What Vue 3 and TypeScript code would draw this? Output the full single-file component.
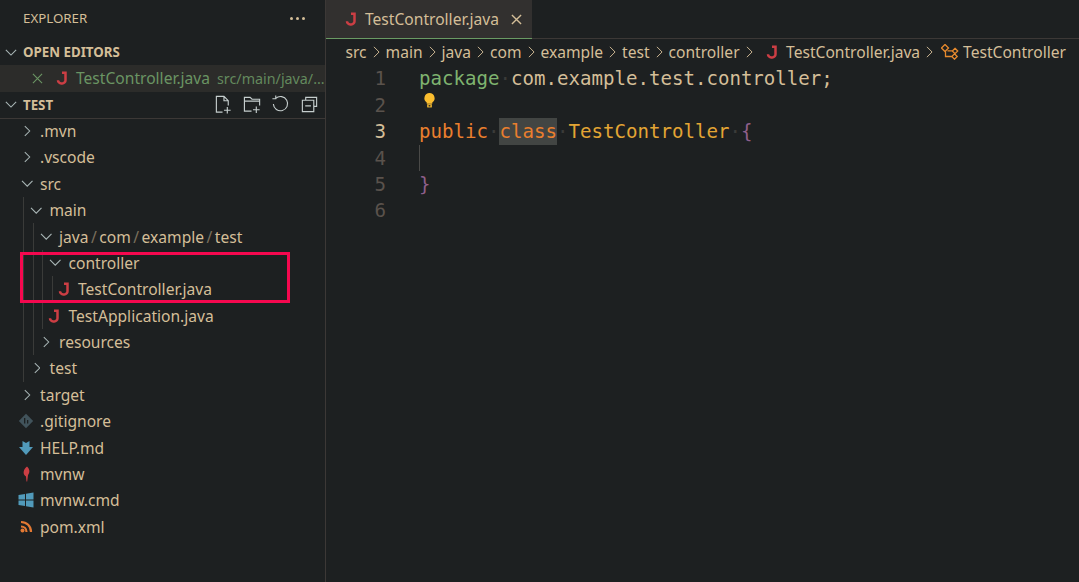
<script setup lang="ts">
interface Row {
  name: string
  depth: number
  kind: 'open' | 'closed' | 'java' | 'git' | 'md' | 'feather' | 'win' | 'rss'
  parts?: string[]
}
const rows: Row[] = [
  { name: '.mvn', depth: 0, kind: 'closed' },
  { name: '.vscode', depth: 0, kind: 'closed' },
  { name: 'src', depth: 0, kind: 'open' },
  { name: 'main', depth: 1, kind: 'open' },
  { name: '', depth: 2, kind: 'open', parts: ['java', 'com', 'example', 'test'] },
  { name: 'controller', depth: 3, kind: 'open' },
  { name: 'TestController.java', depth: 4, kind: 'java' },
  { name: 'TestApplication.java', depth: 3, kind: 'java' },
  { name: 'resources', depth: 2, kind: 'closed' },
  { name: 'test', depth: 1, kind: 'closed' },
  { name: 'target', depth: 0, kind: 'closed' },
  { name: '.gitignore', depth: 0, kind: 'git' },
  { name: 'HELP.md', depth: 0, kind: 'md' },
  { name: 'mvnw', depth: 0, kind: 'feather' },
  { name: 'mvnw.cmd', depth: 0, kind: 'win' },
  { name: 'pom.xml', depth: 0, kind: 'rss' }
]
const crumbs = ['src', 'main', 'java', 'com', 'example', 'test', 'controller']
const lineNumbers = [1, 2, 3, 4, 5, 6]
const javaPath = 'M6 1.800H9.500V9.200a3.200 3.200 0 0 1-3.200 3.200H5.200a3.200 3.200 0 0 1-3.200-3.200'
</script>

<template>
  <div class="app">
    <aside class="sidebar">
      <header class="side-title">
        <span>EXPLORER</span>
        <span class="more"><i></i><i></i><i></i></span>
      </header>

      <div class="section-head">
        <svg class="chev-down" viewBox="0 0 14 8"><path d="M1 1l6 6 6-6" /></svg>
        <b>OPEN EDITORS</b>
      </div>
      <div class="open-item">
        <svg class="close-x" viewBox="0 0 12 12"><path d="M1 1l10 10M11 1L1 11" /></svg>
        <svg class="java" viewBox="0 0 12 14"><path :d="javaPath" /></svg>
        <span class="open-name">TestController.java</span>
        <span class="open-path">src/main/java/...</span>
      </div>

      <div class="section-head test-head">
        <svg class="chev-down" viewBox="0 0 14 8"><path d="M1 1l6 6 6-6" /></svg>
        <b>TEST</b>
        <div class="actions">
          <svg viewBox="0 0 20 20"><path d="M9 18H2.500V1.500h8l4.500 4.500v5M10.500 1.500V6H15M14 12.500v7M10.500 16h7" /></svg>
          <svg viewBox="0 0 20 20"><path d="M9 17H1.500V2.500h6l2 2h8V11M1.500 6.500h16M14 12v7M10.500 15.500h7" /></svg>
          <svg viewBox="0 0 20 20"><path d="M5 3.500a7.500 7.500 0 1 1-2.500 6M5 0.500v3.500H1.500" /></svg>
          <svg viewBox="0 0 20 20"><path d="M6 5V2.500h11.500V12H15M2.500 5.500h12v12h-12zM5.500 11.500h6" /></svg>
        </div>
      </div>

      <div class="tree">
        <div v-for="row in rows" :key="row.name + row.depth" class="row">
          <span v-for="n in row.depth" :key="n" class="guide"></span>
          <svg v-if="row.kind === 'open'" class="twist open" viewBox="0 0 14 8"><path d="M1 1l6 6 6-6" /></svg>
          <svg v-else-if="row.kind === 'closed'" class="twist closed" viewBox="0 0 8 14"><path d="M1 1l6 6-6 6" /></svg>
          <span v-else class="file-icon">
            <svg v-if="row.kind === 'java'" class="java" viewBox="0 0 12 14"><path :d="javaPath" /></svg>
            <svg v-else-if="row.kind === 'git'" class="fill" viewBox="0 0 16 16">
              <path fill="#41535b" d="M8 0.800l7.200 7.200L8 15.200 0.800 8z" />
              <path fill="#1d2021" d="M6 5h1.300v5.500H6zM9 7h1.300v3.500H9z" />
            </svg>
            <svg v-else-if="row.kind === 'md'" class="fill" viewBox="0 0 16 16">
              <path fill="#519aba" d="M4.500 1l3.500 2 3.500-2v6H15L8 15 1 7h3.500z" />
            </svg>
            <svg v-else-if="row.kind === 'feather'" class="fill" viewBox="0 0 16 16">
              <path fill="#cc3e44" d="M9 0.500c2.800 2.500 3.200 6 1 8.500L9.200 15.500h-0.700L8 10.500C4.500 8.500 5 3.500 9 0.500z" />
            </svg>
            <svg v-else-if="row.kind === 'win'" class="fill win" viewBox="0 0 16 16">
              <path fill="#519aba" d="M0.500 3l6.500-1v5.500H0.500zM8 1.800L15.500 0.500v7H8zM0.500 8.500H7V14L0.500 13zM8 8.500h7.500v7L8 14.200z" />
            </svg>
            <svg v-else class="fill rss" viewBox="0 0 16 16">
              <path fill="none" stroke="#e37933" stroke-width="2.200" d="M3 3c5.800 0 10 4.200 10 10M3 7.500c3.200 0 5.500 2.300 5.500 5.500" />
              <circle cx="4.500" cy="11.500" r="2" fill="#e37933" />
            </svg>
          </span>
          <span class="label">
            <template v-if="row.parts">
              <template v-for="(p, i) in row.parts" :key="p">
                <span v-if="i > 0" class="slash">/</span>{{ p }}
              </template>
            </template>
            <template v-else>{{ row.name }}</template>
          </span>
        </div>
      </div>

      <div class="callout"></div>
    </aside>

    <main class="editor">
      <div class="tabs">
        <div class="tab">
          <svg class="java" viewBox="0 0 12 14"><path :d="javaPath" /></svg>
          <span>TestController.java</span>
          <svg class="tab-x" viewBox="0 0 12 12"><path d="M1 1l10 10M11 1L1 11" /></svg>
        </div>
      </div>
      <nav class="crumbs">
        <template v-for="c in crumbs" :key="c">
          <span>{{ c }}</span>
          <svg class="sep" viewBox="0 0 8 14"><path d="M1 1l6 6-6 6" /></svg>
        </template>
        <svg class="java crumb-java" viewBox="0 0 12 14"><path :d="javaPath" /></svg>
        <span>TestController.java</span>
        <svg class="sep" viewBox="0 0 8 14"><path d="M1 1l6 6-6 6" /></svg>
        <svg class="symbol" viewBox="0 0 18 16">
          <path d="M4 0.500L7.500 4 4 7.500 0.500 4zM14 4.300l2.700 2.700-2.700 2.700-2.700-2.700zM13.500 9.800l2.700 2.700-2.700 2.700-2.700-2.700zM6.500 6.800h5M4.500 7v5.500h6" />
        </svg>
        <span>TestController</span>
      </nav>
      <div class="code">
        <div class="gutter">
          <div v-for="n in lineNumbers" :key="n" class="ln" :class="{ active: n === 3 }">{{ n }}</div>
        </div>
        <div class="lines">
          <div class="line"><span class="kw-green">package</span><span class="ws">·</span>com.example.test.controller;</div>
          <div class="line bulb-line">
            <svg class="bulb" viewBox="0 0 14 16">
              <path fill="#fabd2f" d="M7 0.500a5.500 5.500 0 0 1 3 10.100V12H4v-1.400A5.500 5.500 0 0 1 7 0.500z" />
              <path fill="#fabd2f" d="M4.500 12.500h5V16h-5z" />
              <path fill="#1d2021" d="M6 13.500h2V15H6z" />
            </svg>
          </div>
          <div class="line"><span class="kw-orange">public</span><span class="ws">·</span><span class="hl kw-orange">class</span><span class="ws">·</span><span class="type">TestController</span><span class="ws">·</span><span class="brace">{</span></div>
          <div class="line"><span class="caret"></span></div>
          <div class="line"><span class="brace">}</span></div>
          <div class="line"></div>
        </div>
      </div>
    </main>
  </div>
</template>

<style>
html, body { margin: 0; background: #1d2021; }
</style>

<style scoped>
.app {
  display: flex;
  width: 1079px;
  height: 582px;
  overflow: hidden;
  background: #1d2021;
  color: #d4be98;
  font-family: "Noto Sans", sans-serif;
  font-size: 15.600px;
}
svg { fill: none; stroke-linecap: butt; flex: none; }
.sidebar {
  position: relative;
  width: 325px;
  flex: none;
  border-right: 1px solid #3c3836;
}
.side-title {
  height: 39px;
  padding: 0 20px 3px 23px;
  box-sizing: border-box;
  display: flex;
  align-items: center;
  justify-content: space-between;
  font-size: 13.300px;
}
.more { display: flex; gap: 3px; }
.more i { width: 3px; height: 3px; border-radius: 50%; background: #d4be98; }
.section-head {
  height: 26.400px;
  display: flex;
  align-items: center;
  font-size: 13.300px;
  box-sizing: border-box;
}
.section-head b { font-weight: 700; }
.chev-down { width: 12px; height: 7px; margin: 0 6px 0 5px; stroke: #a8b5b5; stroke-width: 1.300; }
.test-head { height: 27px; border-bottom: 1px solid #3c3836; position: relative; }
.open-item {
  height: 26.400px;
  box-sizing: border-box;
  padding-bottom: 1px;
  background: #2c2c2a;
  display: flex;
  align-items: center;
  color: #6a9463;
}
.close-x { width: 11px; height: 11px; margin-left: 32px; stroke: #6a9463; stroke-width: 1.200; }
.open-item .java { margin-left: 13px; margin-right: 8px; }
.open-path { margin-left: 7px; font-size: 14.300px; opacity: 0.9; }
.java { width: 12px; height: 14px; stroke: #cc3e44; stroke-width: 2.500; }
.actions { display: flex; position: absolute; left: 214px; top: 3px; gap: 9.500px; }
.actions svg { width: 19px; height: 19px; stroke: #c5cdcd; stroke-width: 1.200; }
.tree { display: flex; flex-direction: column; margin-top: -1px; }
.row {
  height: 26.400px;
  display: flex;
  align-items: center;
  padding-left: 23px;
  white-space: nowrap;
}
.guide {
  width: 9.500px;
  height: 100%;
  flex: none;
  box-sizing: border-box;
  border-left: 1px solid #3a3b39;
}
.twist { stroke: #a8b5b5; stroke-width: 1.300; }
.twist.open { height: 7px; width: 12.500px; margin-left: -2.500px; margin-right: 7px; }
.twist.closed { height: 12px; width: 6.500px; margin-left: 1px; margin-right: 9.500px; }
.file-icon {
  width: 16px;
  height: 16px;
  margin-left: -5.500px;
  margin-right: 6.500px;
  display: flex;
  align-items: center;
  justify-content: center;
  flex: none;
}
.fill { width: 16px; height: 16px; }
.slash { margin: 0 2.500px; opacity: 0.5; }
.callout {
  position: absolute;
  left: 20px;
  top: 252px;
  width: 270px;
  height: 51px;
  box-sizing: border-box;
  border: 3px solid #f5084f;
  pointer-events: none;
}
.editor { flex: 1; min-width: 0; display: flex; flex-direction: column; }
.tabs { height: 39px; flex: none; border-bottom: 1px solid #3c3836; box-sizing: border-box; }
.tab {
  width: 206px;
  height: 39px;
  box-sizing: border-box;
  background: #32302f;
  border-bottom: 1px solid #6a9a63;
  display: flex;
  align-items: center;
  padding-left: 19px;
}
.tab > span { margin-left: 8px; }
.tab-x { width: 11px; height: 11px; margin-left: 12px; stroke: #d4be98; stroke-width: 1.500; }
.crumbs {
  height: 26.400px;
  display: flex;
  align-items: center;
  padding-left: 19.500px;
  white-space: nowrap;
  flex: none;
}
.sep { width: 7px; height: 12px; margin: 0 6px; stroke: #d4be98; stroke-width: 1.100; }
.crumb-java { margin: 0 8px 0 7.500px; }
.symbol { width: 18px; height: 16px; margin: 0 4px 0 2px; stroke: #e78a2e; stroke-width: 1.300; }
.code { display: flex; font-family: "DejaVu Sans Mono", monospace; font-size: 19.100px; white-space: pre; }
.gutter { width: 93px; flex: none; box-sizing: border-box; padding-right: 33px; text-align: right; color: #5a524c; }
.ln { height: 26.400px; line-height: 28px; }
.ln.active { color: #d4be98; }
.lines { flex: 1; min-width: 0; }
.line { height: 26.400px; line-height: 28px; position: relative; }
.kw-green { color: #7fb36f; }
.kw-orange { color: #ea7f2e; }
.type { color: #e3a534; }
.brace { color: #8f5f8a; }
.ws { color: #3a3b39; }
.hl { background: #424543; display: inline-block; height: 26.400px; vertical-align: top; }
.caret { display: block; width: 1px; height: 100%; background: #4a4a48; }
.bulb { position: absolute; left: 4px; top: 0; width: 13px; height: 16px; }
</style>
